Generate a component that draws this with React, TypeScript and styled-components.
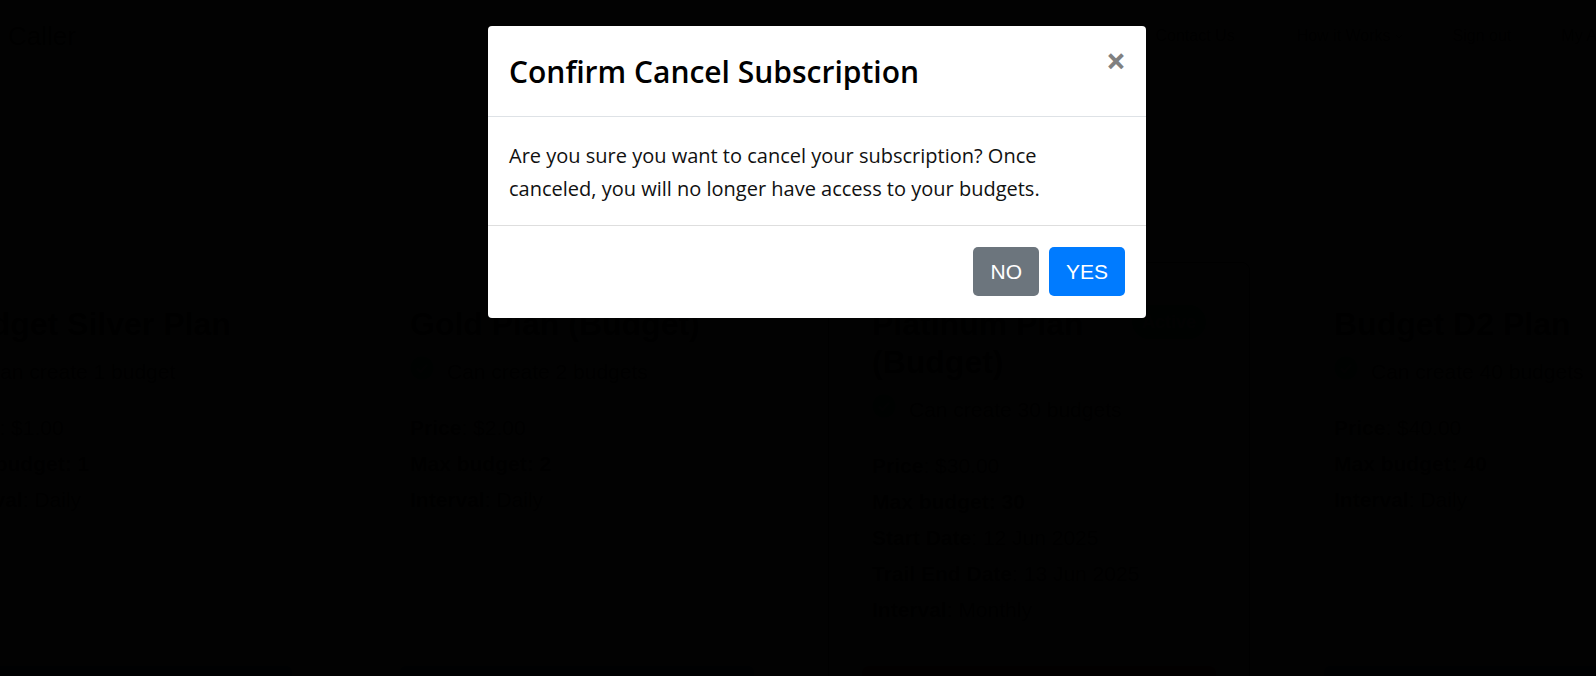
import React from 'react';
import styled, { createGlobalStyle } from 'styled-components';

const GlobalStyle = createGlobalStyle`
  *, *::before, *::after { box-sizing: border-box; }
  body {
    margin: 0;
    background: #fff;
    color: #000;
    font-family: 'Liberation Sans', Arial, sans-serif;
    font-size: 21px;
  }
`;

const Page = styled.div`
  height: 100vh;
  overflow: hidden;
`;

const Header = styled.header`
  display: flex;
  align-items: center;
  justify-content: space-between;
  height: 72px;
  margin-right: -48px;
  padding-left: 8px;
  white-space: nowrap;
`;

const Brand = styled.a`
  color: #000;
  font-size: 26px;
  text-decoration: none;
`;

const Nav = styled.nav`
  display: flex;
  align-items: center;
  gap: 50px;
`;

const NavLink = styled.a<{ $wide?: boolean }>`
  display: flex;
  align-items: center;
  gap: 4px;
  margin-right: ${(p) => (p.$wide ? '12px' : '0')};
  color: #000;
  font-size: 16px;
  text-decoration: none;
`;

const Plans = styled.main`
  display: flex;
  gap: 40px;
  margin-left: -96px;
  padding-top: 190px;
`;

const Card = styled.article<{ $active?: boolean }>`
  display: flex;
  flex: 0 0 422px;
  flex-direction: column;
  padding: 42px 33px;
  border: 1px solid ${(p) => (p.$active ? '#000' : 'transparent')};
  border-radius: 8px;
`;

const CardContent = styled.div`
  padding: 0 10px;
`;

const CardHead = styled.div`
  display: flex;
  align-items: flex-start;
  justify-content: space-between;
`;

const PlanName = styled.h2`
  margin: 0;
  font-size: 32px;
  font-weight: 700;
  line-height: 38px;
`;

const Badge = styled.span`
  padding: 0 10px;
  border-radius: 17px;
  background: #00c878;
  color: #fff;
  font-size: 18px;
  font-weight: 700;
  line-height: 34px;
`;

const Feature = styled.div`
  display: flex;
  align-items: flex-start;
  gap: 13px;
  margin: 13px 0 22px;
  line-height: 32px;
`;

const Detail = styled.p<{ $strong?: boolean }>`
  margin: 0;
  font-weight: ${(p) => (p.$strong ? 700 : 400)};
  line-height: 36px;
`;

const PlanButton = styled.button<{ $active?: boolean }>`
  flex: 0 0 60px;
  margin-top: ${(p) => (p.$active ? '38px' : 'auto')};
  border: 0;
  border-radius: 6px;
  background: ${(p) => (p.$active ? '#dc3545' : '#007bff')};
`;

const Backdrop = styled.div`
  position: fixed;
  inset: 0;
  display: flex;
  align-items: flex-start;
  justify-content: center;
  padding: 26px 0 0 38px;
  background: rgba(0, 0, 0, 0.992);
`;

const Dialog = styled.section`
  flex: 0 1 658px;
  border-radius: 4px;
  background: #fff;
  font-family: 'Segoe UI', 'Open Sans', 'Noto Sans', sans-serif;
`;

const DialogHead = styled.header`
  display: flex;
  align-items: flex-start;
  justify-content: space-between;
  padding: 22px 20px 20px 21px;
  border-bottom: 1px solid #dee2e6;
`;

const DialogTitle = styled.h1`
  margin: 0;
  font-size: 30px;
  font-weight: 600;
  line-height: 48px;
`;

const CloseButton = styled.button`
  padding: 0;
  border: 0;
  background: transparent;
  color: #808080;
  font-family: inherit;
  font-size: 35px;
  font-weight: 700;
  line-height: 26px;
`;

const DialogBody = styled.p`
  margin: 0;
  padding: 22px 21px 20px;
  color: #111;
  font-size: 20px;
  line-height: 33px;
`;

const DialogFoot = styled.footer`
  display: flex;
  justify-content: flex-end;
  gap: 10px;
  padding: 21px 21px 22px;
  border-top: 1px solid #dedede;
`;

const ActionButton = styled.button<{ $primary?: boolean }>`
  height: 49px;
  padding: 0 17px;
  border: 0;
  border-radius: 5px;
  background: ${(p) => (p.$primary ? '#007bff' : '#6c757d')};
  color: #fff;
  font-family: 'Liberation Sans', Arial, sans-serif;
  font-size: 21px;
`;

const CheckIcon = () => (
  <svg width="24" height="24" viewBox="0 0 24 24" aria-hidden="true">
    <circle cx="12" cy="12" r="11.5" fill="#00c878" />
    <path d="M7 12.5l3.5 3.5L17 9" fill="none" stroke="#fff" strokeWidth="2" />
  </svg>
);

const Chevron = () => (
  <svg width="8" height="5" viewBox="0 0 8 5" aria-hidden="true">
    <path d="M1 1l3 3 3-3" fill="none" stroke="#000" />
  </svg>
);

type Plan = {
  name: string;
  feature: string;
  price: string;
  max: number;
  interval: string;
  start?: string;
  trialEnd?: string;
};

const plans: Plan[] = [
  { name: 'Budget Silver Plan', feature: 'Can create 1 budget', price: '$1.00', max: 1, interval: 'Daily' },
  { name: 'Gold Plan (Budget)', feature: 'Can create 2 budgets', price: '$2.00', max: 2, interval: 'Daily' },
  {
    name: 'Platinum Plan (Budget)',
    feature: 'Can create 30 budgets',
    price: '$30.00',
    max: 30,
    interval: 'Monthly',
    start: '12 Jun 2025',
    trialEnd: '13 Jun 2025',
  },
  { name: 'Budget D2 Plan', feature: 'Can create 40 budgets', price: '$40.00', max: 40, interval: 'Daily' },
];

const PlanCard = ({ plan }: { plan: Plan }) => {
  const active = Boolean(plan.start);
  return (
    <Card $active={active}>
      <CardContent>
        <CardHead>
          <PlanName>{plan.name}</PlanName>
          {active && <Badge>Active</Badge>}
        </CardHead>
        <Feature>
          <CheckIcon />
          {plan.feature}
        </Feature>
        <Detail><b>Price</b>: {plan.price}</Detail>
        <Detail $strong>Max budget: {plan.max}</Detail>
        {plan.start && <Detail><b>Start Date</b>: {plan.start}</Detail>}
        {plan.trialEnd && <Detail><b>Trail End Date</b>: {plan.trialEnd}</Detail>}
        <Detail><b>Interval</b>: {plan.interval}</Detail>
      </CardContent>
      <PlanButton $active={active} aria-label={active ? 'Cancel' : 'Subscribe'} />
    </Card>
  );
};

export default function App() {
  return (
    <>
      <GlobalStyle />
      <Page>
        <Header>
          <Brand href="#">Caller</Brand>
          <Nav>
            <NavLink href="#" $wide>Contact Us</NavLink>
            <NavLink href="#">How it Works <Chevron /></NavLink>
            <NavLink href="#">Sign out</NavLink>
            <NavLink href="#">My Account</NavLink>
          </Nav>
        </Header>
        <Plans>
          {plans.map((plan) => <PlanCard key={plan.name} plan={plan} />)}
        </Plans>
      </Page>
      <Backdrop>
        <Dialog role="dialog" aria-modal="true" aria-labelledby="dialog-title">
          <DialogHead>
            <DialogTitle id="dialog-title">Confirm Cancel Subscription</DialogTitle>
            <CloseButton aria-label="Close">×</CloseButton>
          </DialogHead>
          <DialogBody>
            Are you sure you want to cancel your subscription? Once canceled, you will no longer have access to your budgets.
          </DialogBody>
          <DialogFoot>
            <ActionButton>NO</ActionButton>
            <ActionButton $primary>YES</ActionButton>
          </DialogFoot>
        </Dialog>
      </Backdrop>
    </>
  );
}
